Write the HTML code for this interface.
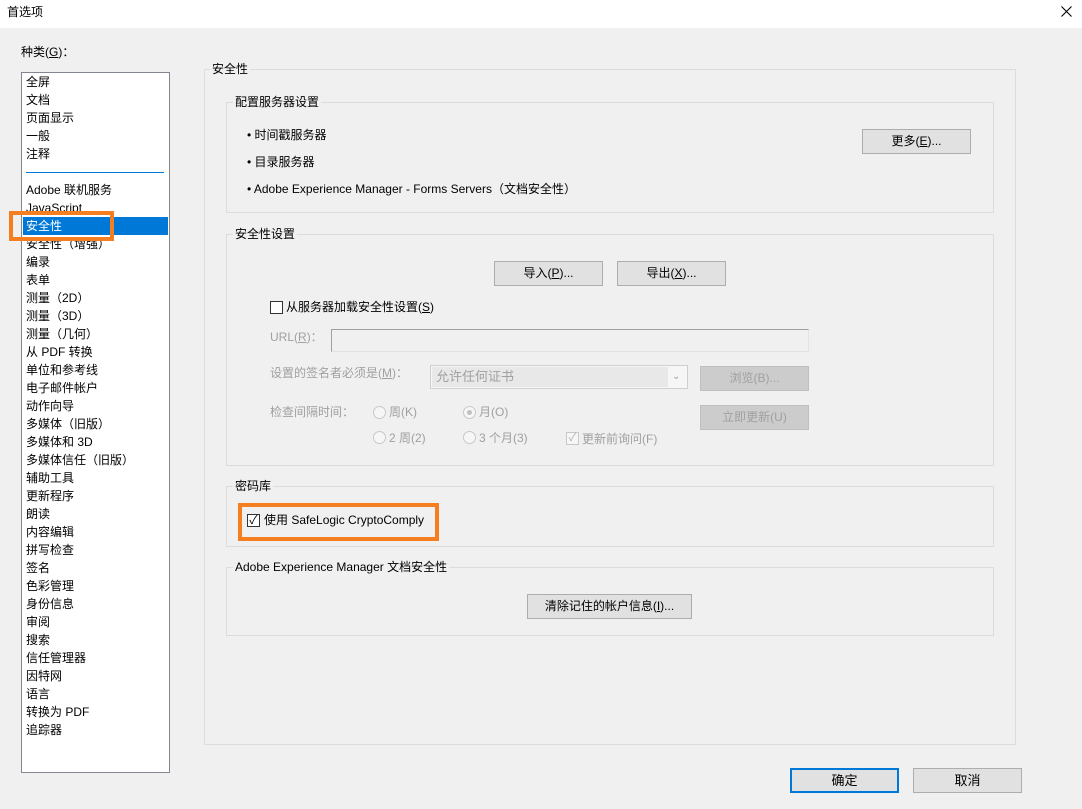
<!DOCTYPE html>
<html><head><meta charset="utf-8"><style>
*{margin:0;padding:0;box-sizing:border-box}
body{width:1082px;height:809px;background:#f0f0f0;font-family:"Liberation Sans","Noto Sans CJK SC",sans-serif;font-size:12px;color:#000;position:relative;overflow:hidden}
.a{position:absolute;white-space:nowrap;line-height:16px}
.box{position:absolute;border:1px solid #dcdcdc}
.gt{position:absolute;background:#f0f0f0;padding:0 2px;line-height:16px;white-space:nowrap;font-size:12px}
.btn{position:absolute;background:#e1e1e1;border:1px solid #adadad;text-align:center;font-size:12px}
.dis{color:#a0a0a0}
.dbtn{position:absolute;background:#cccccc;border:1px solid #bfbfbf;color:#a0a0a0;text-align:center}
.li{position:absolute;left:26px;line-height:18px;white-space:nowrap}
.rad{position:absolute;width:13px;height:13px;border:1px solid #c8c8c8;border-radius:50%;background:#f6f6f6}
.chk{position:absolute;width:13px;height:13px;border:1px solid #333;background:#fff}
</style></head><body>
<div style="position:absolute;left:0;top:0;width:1082px;height:28px;background:#fff"></div>
<div class="a" style="left:7px;top:4px">首选项</div>
<svg style="position:absolute;left:1061px;top:6px" width="11" height="11"><path d="M0.5 0.5L10.5 10.5M10.5 0.5L0.5 10.5" stroke="#000" stroke-width="1.1"/></svg>

<div class="a" style="left:21px;top:44px">种类(<u>G</u>)：</div>
<div style="position:absolute;left:21px;top:72px;width:149px;height:701px;background:#fff;border:1px solid #828790"></div>
<div class="li" style="top:73px">全屏</div>
<div class="li" style="top:91px">文档</div>
<div class="li" style="top:109px">页面显示</div>
<div class="li" style="top:127px">一般</div>
<div class="li" style="top:145px">注释</div>
<div style="position:absolute;left:26px;top:172px;width:138px;height:1px;background:#0078d7"></div>
<div class="li" style="top:181px">Adobe 联机服务</div>
<div class="li" style="top:199px">JavaScript</div>
<div style="position:absolute;left:23px;top:217px;width:145px;height:18px;background:#0078d7"></div>
<div class="li" style="top:217px;color:#fff">安全性</div>
<div class="li" style="top:235px">安全性（增强）</div>
<div class="li" style="top:253px">编录</div>
<div class="li" style="top:271px">表单</div>
<div class="li" style="top:289px">测量（2D）</div>
<div class="li" style="top:307px">测量（3D）</div>
<div class="li" style="top:325px">测量（几何）</div>
<div class="li" style="top:343px">从 PDF 转换</div>
<div class="li" style="top:361px">单位和参考线</div>
<div class="li" style="top:379px">电子邮件帐户</div>
<div class="li" style="top:397px">动作向导</div>
<div class="li" style="top:415px">多媒体（旧版）</div>
<div class="li" style="top:433px">多媒体和 3D</div>
<div class="li" style="top:451px">多媒体信任（旧版）</div>
<div class="li" style="top:469px">辅助工具</div>
<div class="li" style="top:487px">更新程序</div>
<div class="li" style="top:505px">朗读</div>
<div class="li" style="top:523px">内容编辑</div>
<div class="li" style="top:541px">拼写检查</div>
<div class="li" style="top:559px">签名</div>
<div class="li" style="top:577px">色彩管理</div>
<div class="li" style="top:595px">身份信息</div>
<div class="li" style="top:613px">审阅</div>
<div class="li" style="top:631px">搜索</div>
<div class="li" style="top:649px">信任管理器</div>
<div class="li" style="top:667px">因特网</div>
<div class="li" style="top:685px">语言</div>
<div class="li" style="top:703px">转换为 PDF</div>
<div class="li" style="top:721px">追踪器</div>
<div style="position:absolute;left:9px;top:211px;width:105px;height:30px;border:4px solid #f57f20"></div>

<div class="box" style="left:204px;top:69px;width:812px;height:676px"></div>
<div class="gt" style="left:210px;top:61px">安全性</div>

<div class="box" style="left:226px;top:102px;width:768px;height:111px"></div>
<div class="gt" style="left:233px;top:94px">配置服务器设置</div>
<div class="a" style="left:247px;top:127px">• 时间戳服务器</div>
<div class="a" style="left:247px;top:154px">• 目录服务器</div>
<div class="a" style="left:247px;top:181px">• Adobe Experience Manager - Forms Servers（文档安全性）</div>
<div class="btn" style="left:862px;top:129px;width:109px;height:25px;line-height:23px">更多(<u>E</u>)...</div>

<div class="box" style="left:226px;top:234px;width:768px;height:232px"></div>
<div class="gt" style="left:233px;top:226px">安全性设置</div>
<div class="btn" style="left:494px;top:261px;width:109px;height:25px;line-height:23px">导入(<u>P</u>)...</div>
<div class="btn" style="left:617px;top:261px;width:109px;height:25px;line-height:23px">导出(<u>X</u>)...</div>
<div class="chk" style="left:270px;top:301px"></div>
<div class="a" style="left:286px;top:299px">从服务器加载安全性设置(<u>S</u>)</div>
<div class="a dis" style="left:270px;top:329px">URL(<u>R</u>)：</div>
<div style="position:absolute;left:331px;top:329px;width:478px;height:23px;background:#f0f0f0;border:1px solid #a0a0a0;border-right-color:#e3e3e3;border-bottom-color:#e3e3e3"></div>
<div class="a dis" style="left:270px;top:365px">设置的签名者必须是(<u>M</u>)：</div>
<div style="position:absolute;left:430px;top:365px;width:258px;height:24px;background:#f6f6f6;border:1px solid #cfcfcf"></div>
<div style="position:absolute;left:432px;top:367px;width:236px;height:20px;background:#e8e8e8"></div>
<div class="a dis" style="left:436px;top:369px;font-size:13px">允许任何证书</div>
<div class="a dis" style="left:672px;top:369px;font-size:10px">⌄</div>
<div class="dbtn" style="left:700px;top:366px;width:109px;height:25px;line-height:23px">浏览(B)...</div>
<div class="a dis" style="left:270px;top:404px">检查间隔时间：</div>
<div class="rad" style="left:373px;top:406px"></div><div class="a dis" style="left:389px;top:404px">周(K)</div>
<div class="rad" style="left:463px;top:406px"></div><div style="position:absolute;left:467px;top:410px;width:5px;height:5px;border-radius:50%;background:#c0c0c0"></div><div class="a dis" style="left:479px;top:404px">月(O)</div>
<div class="dbtn" style="left:700px;top:405px;width:109px;height:25px;line-height:23px">立即更新(U)</div>
<div class="rad" style="left:373px;top:431px"></div><div class="a dis" style="left:389px;top:430px">2 周(2)</div>
<div class="rad" style="left:463px;top:431px"></div><div class="a dis" style="left:479px;top:430px">3 个月(3)</div>
<div style="position:absolute;left:566px;top:432px;width:13px;height:13px;border:1px solid #c8c8c8;background:#f6f6f6;color:#b0b0b0;font-size:11px;line-height:11px;text-align:center">✓</div>
<div class="a dis" style="left:582px;top:431px">更新前询问(F)</div>

<div class="box" style="left:226px;top:486px;width:768px;height:61px"></div>
<div class="gt" style="left:233px;top:478px">密码库</div>
<div class="chk" style="left:247px;top:514px;font-size:12px;line-height:11px;text-align:center">✓</div>
<div class="a" style="left:264px;top:512px">使用 SafeLogic CryptoComply</div>
<div style="position:absolute;left:238px;top:503px;width:201px;height:38px;border:4px solid #f57f20"></div>

<div class="box" style="left:226px;top:567px;width:768px;height:69px"></div>
<div class="gt" style="left:233px;top:559px">Adobe Experience Manager 文档安全性</div>
<div class="btn" style="left:527px;top:594px;width:165px;height:25px;line-height:23px">清除记住的帐户信息(<u>I</u>)...</div>

<div class="btn" style="left:790px;top:768px;width:109px;height:25px;line-height:21px;border:2px solid #0078d7;font-size:13px">确定</div>
<div class="btn" style="left:913px;top:768px;width:109px;height:25px;line-height:23px;font-size:13px">取消</div>
</body></html>
